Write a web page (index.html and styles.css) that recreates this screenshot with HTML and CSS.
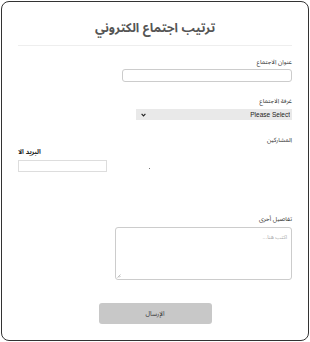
FILE: index.html
```html
<!DOCTYPE html>
<html lang="ar" dir="rtl">
<head>
    <meta charset="UTF-8">
    <meta name="viewport" content="width=device-width, initial-scale=1.0">
    <title>ترتيب اجتماع الكتروني</title>
    <link rel="stylesheet" href="styles.css">
</head>
<body>
    <div class="card">
        <h1>ترتيب اجتماع الكتروني</h1>
        <hr>
        <form class="meeting-form">
            <div class="field">
                <label>عنوان الاجتماع</label>
                <input type="text" class="title-input">
            </div>
            <div class="field">
                <label>غرفة الاجتماع</label>
                <div class="select-wrap">
                    <select class="room-select">
                        <option>Please Select</option>
                    </select>
                    <svg class="chevron" width="5" height="4" viewBox="0 0 5 4">
                        <path d="M0.6 0.8 L2.5 2.9 L4.4 0.8" fill="none" stroke="#222" stroke-width="1.1"/>
                    </svg>
                </div>
            </div>
            <div class="field">
                <label>المشاركين</label>
                <div class="participants">
                    <div class="email-box">
                        <div class="email-label">البريد الا</div>
                        <input type="text" class="email-input">
                    </div>
                    <span class="dot"></span>
                </div>
            </div>
            <div class="field details">
                <label>تفاصيل أخرى</label>
                <div class="textarea-wrap">
                    <textarea placeholder="اكتب هنا..."></textarea>
                    <svg class="grip" width="4" height="4" viewBox="0 0 4 4">
                        <path d="M0.5 3.5 L3.5 0.5 M2 3.5 L3.5 2" stroke="#999" stroke-width="0.6"/>
                    </svg>
                </div>
            </div>
            <div class="actions">
                <button type="button">الإرسال</button>
            </div>
        </form>
    </div>
</body>
</html>
```

FILE: styles.css
```css
* {
    box-sizing: border-box;
}

body {
    margin: 0;
    padding: 1px;
    font-family: 'Liberation Sans', 'Noto Sans Arabic', sans-serif;
    background-color: #ffffff;
    color: #333333;
}

.card {
    width: 308px;
    height: 340px;
    border: 1.5px solid #333333;
    border-radius: 8px;
    padding: 0 16px;
    background-color: #ffffff;
}

h1 {
    text-align: center;
    font-size: 12.5px;
    font-weight: bold;
    color: #555555;
    margin: 12px 0 0 0;
    line-height: 28px;
}

hr {
    border: none;
    border-top: 1px solid #eeeeee;
    margin: 3px 0 0 0;
}

.field label {
    display: block;
    font-size: 6.2px;
    line-height: 10px;
    color: #333333;
}

.field:nth-child(1) {
    padding-top: 11px;
}

.title-input {
    display: block;
    width: 170px;
    height: 13px;
    margin-top: 2px;
    border: 1px solid #cccccc;
    border-radius: 3px;
    padding: 0;
}

.field:nth-child(2) {
    padding-top: 14px;
}

.select-wrap {
    position: relative;
    width: 156px;
    margin-top: 3px;
}

.room-select {
    display: block;
    width: 156px;
    height: 11px;
    border: none;
    border-radius: 0;
    appearance: none;
    -webkit-appearance: none;
    background-color: #e9e9e9;
    font-family: 'Liberation Sans', sans-serif;
    font-size: 6.5px;
    padding: 0 2px;
    color: #222222;
}

.chevron {
    position: absolute;
    left: 5px;
    top: 4px;
}

.field:nth-child(3) {
    padding-top: 15px;
}

.participants {
    direction: ltr;
    display: flex;
    align-items: flex-end;
    height: 27px;
}

.email-box {
    width: 89px;
}

.email-label {
    direction: rtl;
    text-align: left;
    font-size: 6.5px;
    font-weight: bold;
    line-height: 8px;
    color: #222222;
}

.email-input {
    display: block;
    width: 89px;
    height: 12px;
    margin-top: 4px;
    border: 1px solid #dddddd;
    padding: 0;
}

.dot {
    width: 1px;
    height: 1px;
    background-color: #777777;
    margin-left: 42px;
    margin-bottom: 3px;
}

.details {
    padding-top: 42px;
}

.textarea-wrap {
    position: relative;
    width: 177px;
    margin-top: 3px;
}

textarea {
    display: block;
    width: 177px;
    height: 53px;
    border: 1px solid #cccccc;
    border-radius: 3px;
    font-family: 'Liberation Sans', 'Noto Sans Arabic', sans-serif;
    font-size: 5.5px;
    padding: 3px 4px;
    resize: none;
}

textarea::placeholder {
    color: #aaaaaa;
}

.grip {
    position: absolute;
    left: 2px;
    bottom: 2px;
}

.actions {
    display: flex;
    justify-content: center;
    padding-top: 23px;
}

button {
    width: 113px;
    height: 21px;
    border: none;
    border-radius: 3px;
    background-color: #c8c8c8;
    color: #333333;
    font-family: 'Liberation Sans', 'Noto Sans Arabic', sans-serif;
    font-size: 6.5px;
}
```
